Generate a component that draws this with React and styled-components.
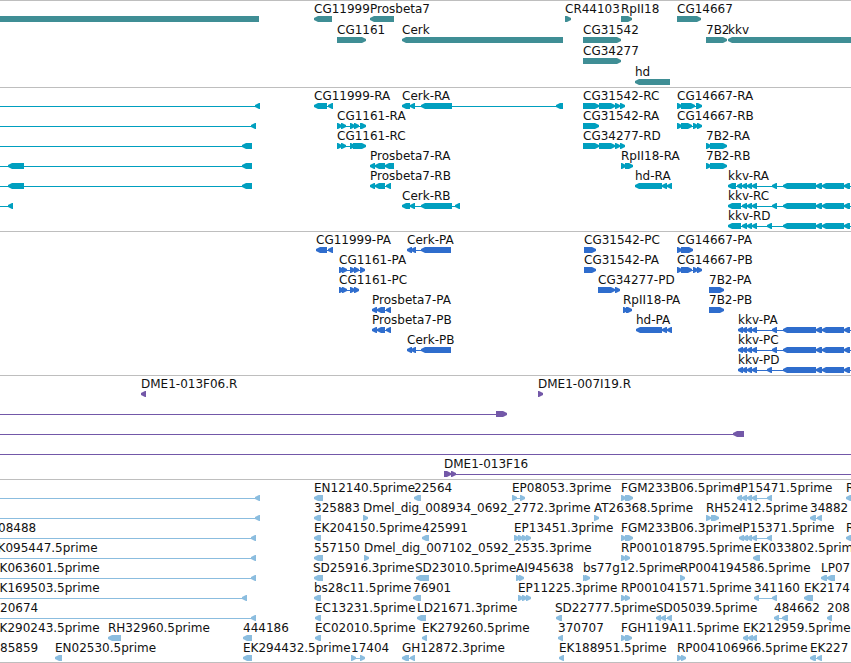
import React from "react";
import styled, { createGlobalStyle } from "styled-components";

const GlobalStyle = createGlobalStyle`
  body {
    margin: 0;
    background: #fff;
    color: #000;
    font-family: "DejaVu Sans", Verdana, sans-serif;
    font-size: 12px;
  }
`;

const Browser = styled.main`
  width: 100%;
  overflow: hidden;
  border-bottom: 1px solid #bebebe;
`;

const TrackPanel = styled.section`
  display: flex;
  flex-direction: column;
  border-top: 1px solid #bebebe;
  padding-bottom: ${(p) => p.$gap}px;
  color: ${(p) => p.$color};
`;

const Lane = styled.div`
  display: flex;
  flex-direction: column;
  height: ${(p) => p.$height}px;
`;

const LabelLine = styled.div`
  position: relative;
  flex: none;
  height: 15px;
`;

const Label = styled.span.attrs((p) => ({ style: { left: p.$x } }))`
  position: absolute;
  top: 0;
  line-height: 16px;
  white-space: nowrap;
  color: #111;
`;

const GlyphLine = styled.svg`
  display: block;
  flex: none;
  width: 100%;
  height: 6px;
  fill: currentColor;
`;

const OFF_LEFT = -40;
const OFF_RIGHT = 4000;

// Feature: [label, label x, direction, exons "start-end ...", intron from, intron to]
const f = (label, x, dir, exons = "", from, to) => {
  const blocks = exons
    ? exons.split(" ").map((e) => {
        const [a, b] = e.split("-");
        return [Number(a), b === "" ? OFF_RIGHT : Number(b)];
      })
    : [];
  return {
    label,
    x,
    dir,
    blocks,
    from: from ?? blocks[0][0],
    to: to ?? blocks[blocks.length - 1][1],
  };
};

const intronTo = (end, exons) => f("", 0, "L", exons, OFF_LEFT, end);

const KKV_TAIL = "783-816 816-822 822-844 844-850";
const kkv = (label, x, exons) =>
  f(label, x, "L", `${exons} ${KKV_TAIL}`, undefined, OFF_RIGHT);

const TRACKS = [
  {
    name: "Genes",
    color: "#3f8e95",
    lane: 21,
    gap: 2,
    rows: [
      [
        f("", 0, "", "0-259"),
        f("CG11999", 314, "L", "314-332"),
        f("Prosbeta7", 370, "L", "370-394"),
        f("CR44103", 565, "R", "565-571"),
        f("RpII18", 621, "R", "621-632"),
        f("CG14667", 677, "R", "677-701"),
      ],
      [
        f("CG1161", 337, "R", "337-366"),
        f("Cerk", 402, "L", "402-563"),
        f("CG31542", 583, "R", "583-621"),
        f("7B2", 706, "R", "706-727"),
        f("kkv", 728, "L", "728-"),
      ],
      [f("CG34277", 583, "R", "583-621")],
      [f("hd", 635, "L", "635-670")],
    ],
  },
  {
    name: "Transcripts",
    color: "#009fbf",
    lane: 20,
    gap: 3,
    rows: [
      [
        intronTo(260, "255-260"),
        f("CG11999-RA", 314, "L", "314-327 328-333"),
        f("Cerk-RA", 402, "L", "402-410 410-415 421-452 556-563"),
        f("CG31542-RC", 583, "R", "583-599 599-615 615-620 620-625"),
        f("CG14667-RA", 677, "R", "677-681 681-695 696-702"),
      ],
      [
        intronTo(256, "251-256"),
        f("CG1161-RA", 337, "R", "337-341 341-346 350-354 354-359 360-366"),
        f("CG31542-RA", 583, "R", "583-599"),
        f("CG14667-RB", 677, "R", "677-681 681-692 693-697 697-702"),
      ],
      [
        intronTo(252, "242-252"),
        f("CG1161-RC", 337, "R", "337-341 341-346 350-353 353-366"),
        f("CG34277-RD", 583, "R", "583-599 599-615 615-620 620-625"),
        f("7B2-RA", 706, "R", "706-710 710-727"),
      ],
      [
        intronTo(252, "8-24 242-252"),
        f("Prosbeta7-RA", 370, "L", "370-375 375-385 385-394"),
        f("RpII18-RA", 621, "R", "621-625 625-633"),
        f("7B2-RB", 706, "R", "706-710 710-727"),
      ],
      [
        intronTo(252, "8-24 242-252"),
        f("Prosbeta7-RB", 370, "L", "370-375 375-385 386-391"),
        f("hd-RA", 635, "L", "635-662 662-667 667-672"),
        kkv("kkv-RA", 728, "728-736 737-742 742-747 747-752 752-757 772-777"),
      ],
      [
        intronTo(13, "8-13"),
        f("Cerk-RB", 402, "L", "402-410 410-415 421-452 455-460"),
        kkv("kkv-RC", 728, "728-741 742-747 747-752 752-757 772-777"),
      ],
      [kkv("kkv-RD", 728, "728-741 742-747 747-752 752-757 767-772")],
    ],
  },
  {
    name: "Proteins",
    color: "#2f6dcd",
    lane: 20,
    gap: 3,
    rows: [
      [
        f("CG11999-PA", 316, "L", "316-327 328-333"),
        f("Cerk-PA", 407, "L", "407-411 411-415 421-451"),
        f("CG31542-PC", 584, "R", "584-596"),
        f("CG14667-PA", 677, "R", "677-681 681-693"),
      ],
      [
        f("CG1161-PA", 339, "R", "339-342 342-346 350-354 354-358 360-365"),
        f("CG31542-PA", 584, "R", "584-596"),
        f("CG14667-PB", 677, "R", "677-681 681-692 693-697 697-701"),
      ],
      [
        f("CG1161-PC", 339, "R", "339-342 342-346 350-354 354-358"),
        f("CG34277-PD", 598, "R", "598-615 615-620"),
        f("7B2-PA", 709, "R", "709-724"),
      ],
      [
        f("Prosbeta7-PA", 372, "L", "372-377 377-385 386-391"),
        f("RpII18-PA", 623, "R", "623-626 626-632"),
        f("7B2-PB", 709, "R", "709-724"),
      ],
      [
        f("Prosbeta7-PB", 372, "L", "372-377 377-385 386-391"),
        f("hd-PA", 636, "L", "636-662 662-667 667-672"),
        kkv("kkv-PA", 738, "738-742 742-747 747-752 752-757 772-777"),
      ],
      [
        f("Cerk-PB", 407, "L", "407-411 411-415 421-451"),
        kkv("kkv-PC", 738, "738-742 742-747 747-752 752-757 772-777"),
      ],
      [kkv("kkv-PD", 738, "738-742 742-747 747-752 752-757 767-772")],
    ],
  },
  {
    name: "Clone ends",
    color: "#7358a8",
    lane: 20,
    gap: 3,
    rows: [
      [
        f("DME1-013F06.R", 141, "L", "141-146"),
        f("DME1-007I19.R", 538, "R", "538-543"),
      ],
      [f("", 0, "R", "496-507", OFF_LEFT)],
      [intronTo(744, "733-744")],
      [f("", 0, "R", "", OFF_LEFT, OFF_RIGHT)],
      [f("DME1-013F16", 444, "R", "444-451 451-456", undefined, OFF_RIGHT)],
    ],
  },
  {
    name: "ESTs",
    color: "#8bbddf",
    lane: 20,
    gap: 2,
    rows: [
      [
        intronTo(260, "255-260"),
        f("EN12140.5prime", 314, "L", "314-323"),
        f("22564", 414, "L", "414-421"),
        f("EP08053.3prime", 512, "R", "512-517 520-525"),
        f("FGM233B06.5prime", 621, "R", "621-625 625-633"),
        f("IP15471.5prime", 737, "L", "737-742 742-747 747-752 752-757 767-772"),
        f("R", 846, "L", "846-860"),
      ],
      [
        intronTo(260, "255-260"),
        f("325883", 314, "L", "314-321"),
        f("Dmel_dig_008934_0692_2772.3prime", 363, "R", "363-368"),
        f("AT26368.5prime", 594, "R", "594-599"),
        f("RH52412.5prime", 706, "R", "706-711 711-719"),
        f("34882", 810, "L", "810-816 817-822"),
      ],
      [
        intronTo(256, "251-256"),
        f("08488", -2, "L", "", OFF_LEFT, 256),
        f("EK204150.5prime", 314, "L", "314-321"),
        f("425991", 422, "L", "422-429"),
        f("EP13451.3prime", 514, "R", "514-518 518-522 522-526 526-530"),
        f("FGM233B06.3prime", 621, "R", "621-625 625-633"),
        f("IP15371.5prime", 739, "L", "739-743 743-747 747-752 752-757 767-772"),
        f("R", 846, "L", "846-860"),
      ],
      [
        f("EK095447.5prime", -10, "L", "251-256", OFF_LEFT),
        f("557150", 314, "L", "314-323"),
        f("Dmel_dig_007102_0592_2535.3prime", 364, "R", "364-369"),
        f("RP001018795.5prime", 621, "R", "621-625 625-630"),
        f("EK033802.5prime", 753, "L", "753-760"),
      ],
      [
        f("EK063601.5prime", -8, "L", "251-256", OFF_LEFT),
        f("SD25916.3prime", 313, "L", "314-323"),
        f("SD23010.5prime", 415, "L", "416-429"),
        f("AI945638", 516, "R", "516-519 519-524"),
        f("bs77g12.5prime", 583, "R", "583-585 585-590"),
        f("RP004194586.5prime", 680, "R", "680-685"),
        f("LP07", 821, "L", "821-827 827-835"),
      ],
      [
        f("EK169503.5prime", -8, "L", "242-247", OFF_LEFT),
        f("bs28c11.5prime", 314, "L", "314-321"),
        f("76901", 413, "L", "413-421"),
        f("EP11225.3prime", 518, "R", "518-522 522-526 526-530"),
        f("RP001041571.5prime", 621, "R", "621-625 625-630"),
        f("341160", 754, "L", "754-759 772-777"),
        f("EK2174", 804, "L", "804-813"),
      ],
      [
        f("20674", 0, "L", "251-256", OFF_LEFT),
        f("EC13231.5prime", 315, "L", "315-321"),
        f("LD21671.3prime", 417, "L", "417-426"),
        f("SD22777.5prime", 555, "L", "556-562"),
        f("SD05039.5prime", 656, "L", "656-661 661-666 667-672"),
        f("484662", 774, "L", "774-779 782-788"),
        f("208", 827, "L", "827-832"),
      ],
      [
        f("EK290243.5prime", -8, "L", "", 0, 0),
        f("RH32960.5prime", 108, "L", "108-121"),
        f("444186", 243, "L", "243-252"),
        f("EC02010.5prime", 315, "L", "315-321"),
        f("EK279260.5prime", 422, "L", "422-427"),
        f("370707", 558, "L", "558-563"),
        f("FGH119A11.5prime", 621, "R", "621-625 625-632"),
        f("EK212959.5prime", 743, "L", "743-748 748-752 752-757"),
      ],
      [
        f("85859", 0, "L", "", 0, 0),
        f("EN02530.5prime", 55, "L", "55-62"),
        f("EK294432.5prime", 243, "L", "243-252"),
        f("17404", 351, "R", "351-356 360-365"),
        f("GH12872.3prime", 402, "L", "402-409 410-415"),
        f("EK188951.5prime", 559, "L", "559-564"),
        f("RP004106966.5prime", 677, "R", "677-681 681-686"),
        f("EK227", 810, "L", "810-816 817-822"),
      ],
    ],
  },
];

const HEAD = 5;

// The head bulges outwards and ends in a two-pixel tip; short exons keep a full head.
function Exon({ start, end, dir }) {
  if (dir === "L") {
    const e = Math.max(end, start + HEAD);
    return (
      <polygon
        points={`${start},2 ${start + 2},1 ${start + 4},0 ${e},0 ${e},6 ${start + 4},6 ${start + 2},5 ${start},4`}
      />
    );
  }
  if (dir === "R") {
    const e = Math.max(end, start + HEAD);
    return (
      <polygon
        points={`${start},0 ${e - 4},0 ${e - 2},1 ${e},2 ${e},4 ${e - 2},5 ${e - 4},6 ${start},6`}
      />
    );
  }
  return <rect x={start} y="0" width={end - start} height="6" />;
}

function Glyph({ feature }) {
  const { from, to, blocks, dir } = feature;
  return (
    <g>
      <rect x={from} y="3" width={to - from} height="1" />
      {blocks.map(([a, b]) => (
        <Exon key={a} start={a} end={b} dir={dir} />
      ))}
    </g>
  );
}

function Track({ track }) {
  return (
    <TrackPanel $color={track.color} $gap={track.gap} aria-label={track.name}>
      {track.rows.map((row, i) => (
        <Lane key={i} $height={track.lane}>
          <LabelLine>
            {row
              .filter((feature) => feature.label)
              .map((feature) => (
                <Label key={feature.x} $x={feature.x}>
                  {feature.label}
                </Label>
              ))}
          </LabelLine>
          <GlyphLine aria-hidden="true">
            {row.map((feature, j) => (
              <Glyph key={j} feature={feature} />
            ))}
          </GlyphLine>
        </Lane>
      ))}
    </TrackPanel>
  );
}

export default function App() {
  return (
    <>
      <GlobalStyle />
      <Browser>
        {TRACKS.map((track) => (
          <Track key={track.name} track={track} />
        ))}
      </Browser>
    </>
  );
}
